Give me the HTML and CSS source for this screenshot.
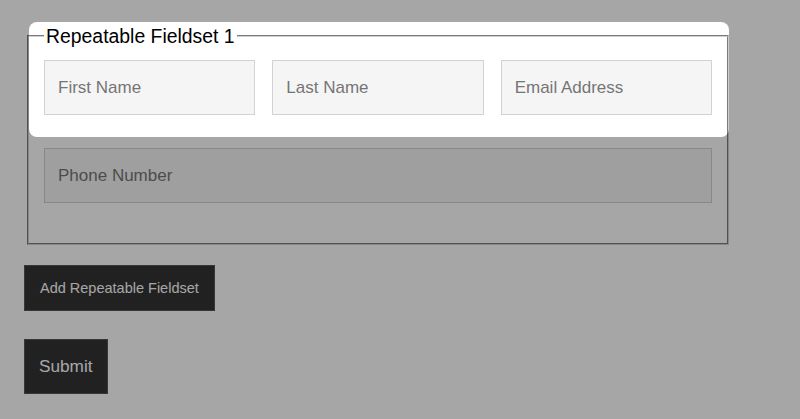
FILE: index.html
```html
<!DOCTYPE html>
<html lang="en">
<head>
<meta charset="utf-8">
<title>Repeatable Fieldset</title>
<link rel="stylesheet" href="styles.css">
</head>
<body>
<form class="form">
  <fieldset class="group">
    <legend class="legend">Repeatable Fieldset 1</legend>
    <div class="rows">
      <div class="row row-3">
        <input class="field" type="text" placeholder="First Name">
        <input class="field" type="text" placeholder="Last Name">
        <input class="field" type="email" placeholder="Email Address">
      </div>
      <div class="row">
        <input class="field" type="tel" placeholder="Phone Number">
      </div>
    </div>
  </fieldset>
  <button class="btn btn-add" type="button">Add Repeatable Fieldset</button>
  <button class="btn btn-submit" type="submit">Submit</button>
</form>
<div class="spotlight"></div>
</body>
</html>
```
FILE: styles.css
```css
html, body {
  margin: 0;
  padding: 0;
  background: #ffffff;
  height: 100%;
}

body {
  font-family: "Liberation Sans", Arial, sans-serif;
  overflow: hidden;
}

.form {
  display: flex;
  flex-direction: column;
  align-items: flex-start;
  padding: 25px 0 0 24px;
}

.group {
  box-sizing: border-box;
  width: 702px;
  margin: 0 0 20px 3px;
  padding: 13px 15px 40px;
  border: 2px groove #cfcfcf;
}

.legend {
  padding: 0 2px;
  font-size: 19.4px;
  line-height: 22px;
  color: #000;
}

.rows {
  display: flex;
  flex-direction: column;
  gap: 33px;
}

.row {
  display: grid;
  grid-template-columns: 1fr;
}

.row-3 {
  grid-template-columns: repeat(3, 1fr);
  gap: 17px;
}

.field {
  box-sizing: border-box;
  width: 100%;
  height: 55px;
  margin: 0;
  padding: 0 13px;
  border: 1px solid #d2d2d2;
  background: #f5f5f5;
  font-family: "Liberation Sans", Arial, sans-serif;
  font-size: 17px;
  color: #333;
  outline: none;
}

.field::placeholder {
  color: #757575;
  opacity: 1;
}

.btn {
  box-sizing: border-box;
  margin: 0;
  border: 1px solid #555;
  background: #333333;
  color: #ffffff;
  font-family: "Liberation Sans", Arial, sans-serif;
  cursor: pointer;
}

.btn-add {
  height: 46px;
  padding: 0 15px;
  font-size: 14.5px;
  margin-bottom: 28px;
}

.btn-submit {
  height: 55px;
  padding: 0 14px;
  font-size: 17.2px;
}

.spotlight {
  position: absolute;
  left: 29px;
  top: 22px;
  width: 700px;
  height: 115px;
  border-radius: 8px;
  box-shadow: 0 0 0 3000px rgba(0, 0, 0, 0.35);
  pointer-events: none;
}
```
